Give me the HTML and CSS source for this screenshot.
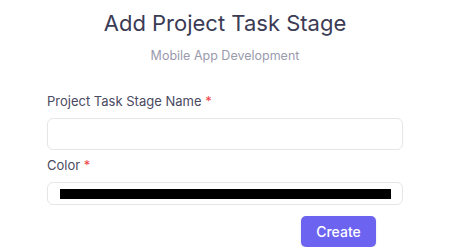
FILE: index.html
```html
<!DOCTYPE html>
<html lang="en">
<head>
    <meta charset="UTF-8">
    <meta name="viewport" content="width=device-width, initial-scale=1.0">
    <title>Add Project Task Stage</title>
    <link rel="stylesheet" href="styles.css">
</head>
<body>
    <div class="modal">
        <h1 class="title">Add Project Task Stage</h1>
        <p class="subtitle">Mobile App Development</p>

        <form class="stage-form">
            <div class="field">
                <label for="stageName">Project Task Stage Name <span class="req">*</span></label>
                <input type="text" id="stageName" class="text-input">
            </div>
            <div class="field">
                <label for="stageColor">Color <span class="req">*</span></label>
                <input type="color" id="stageColor" class="color-input" value="#000000">
            </div>
            <div class="actions">
                <button type="submit" class="btn-create">Create</button>
            </div>
        </form>
    </div>
</body>
</html>
```

FILE: styles.css
```css
body {
    margin: 0;
    font-family: 'Inter', 'Noto Sans', sans-serif;
    background: #ffffff;
    color: #3b3b55;
}

.modal {
    width: 356px;
    margin: 0 auto;
    padding-top: 8px;
}

.title {
    margin: 0;
    text-align: center;
    font-size: 22px;
    font-weight: 400;
    line-height: 30px;
    color: #3b3b55;
}

.subtitle {
    margin: 10px 0 0;
    text-align: center;
    font-size: 12.5px;
    line-height: 16px;
    color: #9a9aad;
}

.stage-form {
    margin-top: 29px;
    display: flex;
    flex-direction: column;
    gap: 7px;
}

.field {
    display: flex;
    flex-direction: column;
    gap: 9px;
}

.field label {
    font-size: 13px;
    line-height: 16px;
    color: #4a4a62;
}

.req {
    color: #ef4444;
}

.text-input {
    box-sizing: border-box;
    height: 32px;
    width: 100%;
    border: 1px solid #e6e6ea;
    border-radius: 6px;
    padding: 0 10px;
    font-family: inherit;
    font-size: 14px;
}

.color-input {
    -webkit-appearance: none;
    appearance: none;
    box-sizing: border-box;
    height: 23px;
    width: 100%;
    border: 1px solid #e6e6ea;
    border-radius: 6px;
    background: #ffffff;
    padding: 0;
    margin: 0;
}

.color-input::-webkit-color-swatch-wrapper {
    padding: 6px 11px 5px 12px;
}

.color-input::-webkit-color-swatch {
    border: none;
    border-radius: 0;
}

.actions {
    display: flex;
    justify-content: flex-end;
    padding-right: 27px;
    margin-top: 4px;
}

.btn-create {
    width: 75px;
    height: 31px;
    border: none;
    border-radius: 5px;
    background: #6c63f0;
    color: #ffffff;
    font-family: inherit;
    font-size: 14px;
    font-weight: 500;
    box-shadow: 0 1px 2px rgba(0, 0, 0, 0.15);
    cursor: pointer;
}
```
